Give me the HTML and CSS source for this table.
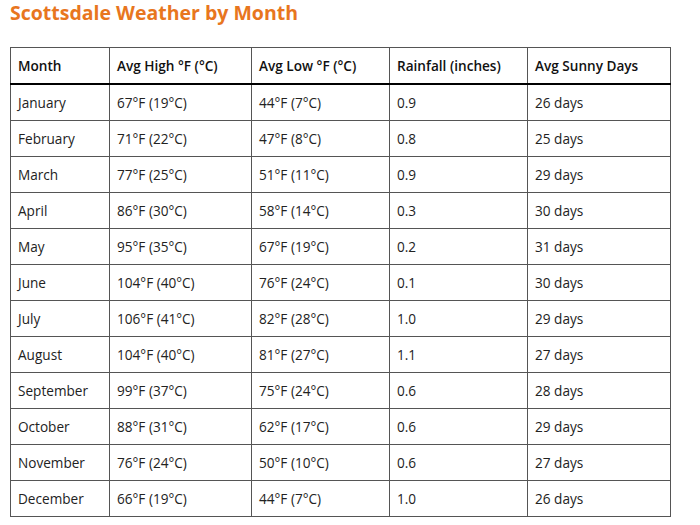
FILE: index.html
```html
<!DOCTYPE html>
<html lang="en">
<head>
<meta charset="utf-8">
<title>Scottsdale Weather by Month</title>
<link rel="stylesheet" href="styles.css">
</head>
<body>
<h2 class="title">Scottsdale Weather by Month</h2>
<table class="weather">
<thead>
<tr><th class="c1">Month</th><th class="c2">Avg High °F (°C)</th><th class="c3">Avg Low °F (°C)</th><th class="c4">Rainfall (inches)</th><th class="c5">Avg Sunny Days</th></tr>
</thead>
<tbody>
<tr><td>January</td><td>67°F (19°C)</td><td>44°F (7°C)</td><td>0.9</td><td>26 days</td></tr>
<tr><td>February</td><td>71°F (22°C)</td><td>47°F (8°C)</td><td>0.8</td><td>25 days</td></tr>
<tr><td>March</td><td>77°F (25°C)</td><td>51°F (11°C)</td><td>0.9</td><td>29 days</td></tr>
<tr><td>April</td><td>86°F (30°C)</td><td>58°F (14°C)</td><td>0.3</td><td>30 days</td></tr>
<tr><td>May</td><td>95°F (35°C)</td><td>67°F (19°C)</td><td>0.2</td><td>31 days</td></tr>
<tr><td>June</td><td>104°F (40°C)</td><td>76°F (24°C)</td><td>0.1</td><td>30 days</td></tr>
<tr><td>July</td><td>106°F (41°C)</td><td>82°F (28°C)</td><td>1.0</td><td>29 days</td></tr>
<tr><td>August</td><td>104°F (40°C)</td><td>81°F (27°C)</td><td>1.1</td><td>27 days</td></tr>
<tr><td>September</td><td>99°F (37°C)</td><td>75°F (24°C)</td><td>0.6</td><td>28 days</td></tr>
<tr><td>October</td><td>88°F (31°C)</td><td>62°F (17°C)</td><td>0.6</td><td>29 days</td></tr>
<tr><td>November</td><td>76°F (24°C)</td><td>50°F (10°C)</td><td>0.6</td><td>27 days</td></tr>
<tr><td>December</td><td>66°F (19°C)</td><td>44°F (7°C)</td><td>1.0</td><td>26 days</td></tr>
</tbody>
</table>
</body>
</html>
```
FILE: styles.css
```css
html, body {
  margin: 0;
  padding: 0;
  background: #ffffff;
}
body {
  padding: 0 10px;
  font-family: "Open Sans", "Noto Sans", sans-serif;
  color: #222222;
}
.title {
  margin: 0 0 21px 0;
  font-size: 19.5px;
  line-height: 26px;
  font-weight: 700;
  color: #e8761e;
}
.weather {
  border-collapse: collapse;
  table-layout: fixed;
  width: 660px;
  font-size: 13.6px;
}
.weather th,
.weather td {
  box-sizing: border-box;
  border: 1px solid #555555;
  padding: 8px 7px;
  line-height: 19px;
  text-align: left;
  white-space: nowrap;
  color: #222222;
}
.weather th {
  font-weight: 600;
  color: #111111;
  border-bottom: 2px solid #000000;
}
.c1 { width: 99px; }
.c2 { width: 142px; }
.c3 { width: 138px; }
.c4 { width: 138px; }
.c5 { width: 143px; }
```
